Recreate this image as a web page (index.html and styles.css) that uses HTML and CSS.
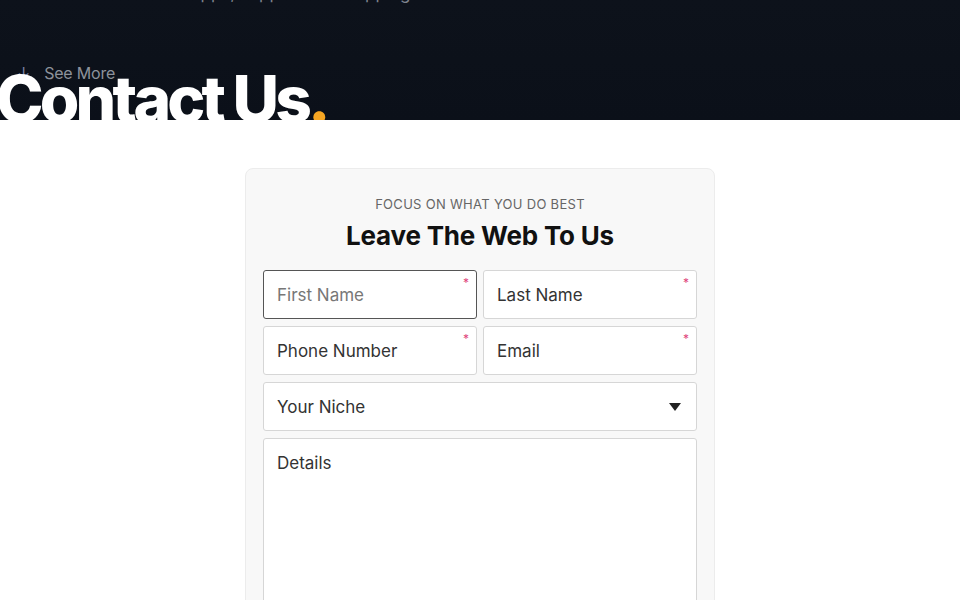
FILE: index.html
```html
<!DOCTYPE html>
<html lang="en">
<head>
    <meta charset="UTF-8">
    <meta name="viewport" content="width=device-width, initial-scale=1.0">
    <title>Contact Us</title>
    <link rel="stylesheet" href="styles.css">
</head>
<body>
    <header class="hero">
        <p class="hero-lead">Web apps, support and shipping</p>
        <a href="#form" class="see-more"><span class="arrow">&#8595;</span>See More</a>
        <h1 class="hero-title">Contact Us<span class="dot">.</span></h1>
    </header>

    <section class="card" id="form">
        <p class="eyebrow">Focus on what you do best</p>
        <h2 class="card-title">Leave The Web To Us</h2>

        <form class="form">
            <label class="field required">
                <input type="text" class="input focus" placeholder="First Name">
            </label>
            <label class="field required">
                <input type="text" class="input" placeholder="Last Name">
            </label>
            <label class="field required">
                <input type="tel" class="input" placeholder="Phone Number">
            </label>
            <label class="field required">
                <input type="email" class="input" placeholder="Email">
            </label>
            <label class="field wide">
                <select class="input select">
                    <option>Your Niche</option>
                </select>
                <svg class="caret" width="12" height="8" viewBox="0 0 12 8"><path d="M0 0h12L6 8z" fill="#222"/></svg>
            </label>
            <label class="field wide">
                <textarea class="input area" placeholder="Details"></textarea>
            </label>
        </form>
    </section>
</body>
</html>
```

FILE: styles.css
```css
* {
    padding: 0;
    margin: 0;
    box-sizing: border-box;
}

body {
    font-family: Inter, "Noto Sans", sans-serif;
    background-color: #fff;
    color: #111;
}

.hero {
    height: 120px;
    overflow: hidden;
    background: linear-gradient(180deg, #0d121b 0%, #0b1019 100%);
}
.hero-lead {
    margin-top: -17px;
    padding-left: 150px;
    font-size: 17px;
    line-height: 20px;
    color: #7d828c;
}
.see-more {
    display: flex;
    align-items: center;
    gap: 14px;
    margin-top: 60px;
    padding-left: 17px;
    font-size: 16px;
    line-height: 20px;
    color: #8d929b;
    text-decoration: none;
    letter-spacing: -0.2px;
}
.arrow {
    color: #7b84a3;
    font-size: 16px;
}
.hero-title {
    margin-top: -17px;
    margin-left: -4px;
    font-size: 64px;
    line-height: 66px;
    font-weight: 800;
    letter-spacing: -3.8px;
    color: #fff;
    white-space: nowrap;
}
.dot {
    color: #f6a623;
}

.card {
    width: 470px;
    margin: 48px auto 0;
    padding: 27px 17px 40px;
    background-color: #f8f8f8;
    border: 1px solid #ececec;
    border-radius: 8px;
    text-align: center;
}
.eyebrow {
    font-size: 13px;
    line-height: 16px;
    text-transform: uppercase;
    letter-spacing: 0.3px;
    color: #666;
}
.card-title {
    margin-top: 9px;
    font-size: 26px;
    line-height: 30px;
    font-weight: 700;
    letter-spacing: -0.2px;
    color: #111;
}

.form {
    display: grid;
    grid-template-columns: 1fr 1fr;
    gap: 7px 6px;
    margin-top: 19px;
    text-align: left;
}
.field {
    position: relative;
    display: block;
}
.field.wide {
    grid-column: 1 / 3;
}
.required::after {
    content: "*";
    position: absolute;
    top: 5px;
    right: 8px;
    font-size: 12px;
    color: #e0457b;
}
.input {
    display: block;
    width: 100%;
    height: 49px;
    padding: 0 13px;
    font-family: inherit;
    font-size: 17px;
    color: #333;
    background-color: #fff;
    border: 1px solid #d6d6d6;
    border-radius: 3px;
    outline: none;
}
.input::placeholder {
    color: #333;
    opacity: 1;
}
.input.focus {
    border-color: #555;
}
.input.focus::placeholder {
    color: #777;
}
.select {
    appearance: none;
    -webkit-appearance: none;
}
.caret {
    position: absolute;
    right: 16px;
    top: 21px;
    pointer-events: none;
}
.area {
    height: 200px;
    padding-top: 14px;
    resize: none;
}
```
